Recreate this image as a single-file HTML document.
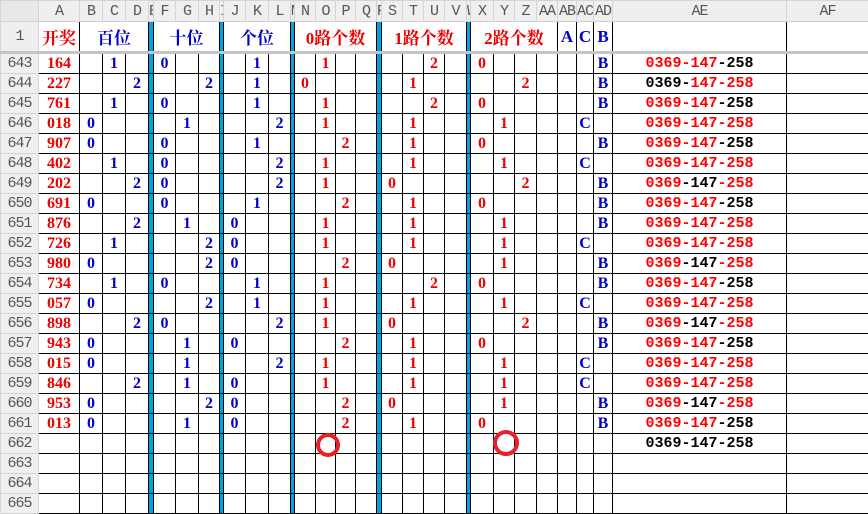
<!DOCTYPE html>
<html><head><meta charset="utf-8">
<style>
html,body{margin:0;padding:0;background:#fff;width:868px;height:505px;overflow:hidden}
table{border-collapse:collapse;table-layout:fixed;width:868px;position:absolute;left:0;top:0}
td,th{padding:0;overflow:hidden;white-space:nowrap;text-align:center}
td{border:1px solid #000;font:bold 16px "Liberation Serif","Noto Serif CJK SC",serif;color:#e00;height:19px;line-height:18px}
td.b{color:#0000cc}
td.c{background:#00a2e0}
td.e{font:bold 15px "Liberation Mono","DejaVu Sans Mono",monospace;color:#000}
.r{color:#ff0000}
th{background:#efefef;color:#555;font:15px "Liberation Mono",monospace;border:1px solid #d4d4d4;font-weight:normal;letter-spacing:-1px}
tr.h th{height:20px;border-bottom:1px solid #d0d0d0}
tr.t td{height:29px;border-bottom:3px solid #c4c4c4;font:bold 17px "Liberation Serif","Noto Serif CJK SC",serif}
tr.t th{border-bottom:3px solid #c4c4c4}
.ring{position:absolute;border:4px solid #e8202a;border-radius:50%;box-sizing:border-box}
</style></head><body>
<table>
<colgroup>
<col style="width:38px"><col style="width:41px"><col style="width:23px"><col style="width:23px"><col style="width:23px"><col style="width:5px"><col style="width:22px"><col style="width:23px"><col style="width:21px"><col style="width:4px"><col style="width:22px"><col style="width:23px"><col style="width:22px"><col style="width:4px"><col style="width:21px"><col style="width:20px"><col style="width:20px"><col style="width:21px"><col style="width:5px"><col style="width:21px"><col style="width:21px"><col style="width:21px"><col style="width:22px"><col style="width:4px"><col style="width:23px"><col style="width:21px"><col style="width:22px"><col style="width:21px"><col style="width:19px"><col style="width:17px"><col style="width:19px"><col style="width:174px"><col style="width:82px">
</colgroup>
<tr class="h"><th style="background:#e8e8e8"></th><th>A</th><th>B</th><th>C</th><th>D</th><th>E</th><th>F</th><th>G</th><th>H</th><th>I</th><th>J</th><th>K</th><th>L</th><th>M</th><th>N</th><th>O</th><th>P</th><th>Q</th><th>R</th><th>S</th><th>T</th><th>U</th><th>V</th><th>W</th><th>X</th><th>Y</th><th>Z</th><th>AA</th><th>AB</th><th>AC</th><th>AD</th><th>AE</th><th>AF</th></tr>
<tr class="t"><th>1</th><td>开奖</td><td colspan="3" class="b">百位</td><td class="c"></td><td colspan="3" class="b">十位</td><td class="c"></td><td colspan="3" class="b">个位</td><td class="c"></td><td colspan="4">0路个数</td><td class="c"></td><td colspan="4">1路个数</td><td class="c"></td><td colspan="4">2路个数</td><td class="b">A</td><td class="b">C</td><td class="b">B</td><td></td><td></td></tr>

<tr><th>643</th><td>164</td><td></td><td class="b">1</td><td></td><td class="c"></td><td class="b">0</td><td></td><td></td><td class="c"></td><td></td><td class="b">1</td><td></td><td class="c"></td><td></td><td>1</td><td></td><td></td><td class="c"></td><td></td><td></td><td>2</td><td></td><td class="c"></td><td>0</td><td></td><td></td><td></td><td></td><td></td><td class="b">B</td><td class="e"><span class="r">0369-147</span>-258</td><td></td></tr>
<tr><th>644</th><td>227</td><td></td><td></td><td class="b">2</td><td class="c"></td><td></td><td></td><td class="b">2</td><td class="c"></td><td></td><td class="b">1</td><td></td><td class="c"></td><td>0</td><td></td><td></td><td></td><td class="c"></td><td></td><td>1</td><td></td><td></td><td class="c"></td><td></td><td></td><td>2</td><td></td><td></td><td></td><td class="b">B</td><td class="e">0369-<span class="r">147-258</span></td><td></td></tr>
<tr><th>645</th><td>761</td><td></td><td class="b">1</td><td></td><td class="c"></td><td class="b">0</td><td></td><td></td><td class="c"></td><td></td><td class="b">1</td><td></td><td class="c"></td><td></td><td>1</td><td></td><td></td><td class="c"></td><td></td><td></td><td>2</td><td></td><td class="c"></td><td>0</td><td></td><td></td><td></td><td></td><td></td><td class="b">B</td><td class="e"><span class="r">0369-147</span>-258</td><td></td></tr>
<tr><th>646</th><td>018</td><td class="b">0</td><td></td><td></td><td class="c"></td><td></td><td class="b">1</td><td></td><td class="c"></td><td></td><td></td><td class="b">2</td><td class="c"></td><td></td><td>1</td><td></td><td></td><td class="c"></td><td></td><td>1</td><td></td><td></td><td class="c"></td><td></td><td>1</td><td></td><td></td><td></td><td class="b">C</td><td></td><td class="e"><span class="r">0369-147-258</span></td><td></td></tr>
<tr><th>647</th><td>907</td><td class="b">0</td><td></td><td></td><td class="c"></td><td class="b">0</td><td></td><td></td><td class="c"></td><td></td><td class="b">1</td><td></td><td class="c"></td><td></td><td></td><td>2</td><td></td><td class="c"></td><td></td><td>1</td><td></td><td></td><td class="c"></td><td>0</td><td></td><td></td><td></td><td></td><td></td><td class="b">B</td><td class="e"><span class="r">0369-147</span>-258</td><td></td></tr>
<tr><th>648</th><td>402</td><td></td><td class="b">1</td><td></td><td class="c"></td><td class="b">0</td><td></td><td></td><td class="c"></td><td></td><td></td><td class="b">2</td><td class="c"></td><td></td><td>1</td><td></td><td></td><td class="c"></td><td></td><td>1</td><td></td><td></td><td class="c"></td><td></td><td>1</td><td></td><td></td><td></td><td class="b">C</td><td></td><td class="e"><span class="r">0369-147-258</span></td><td></td></tr>
<tr><th>649</th><td>202</td><td></td><td></td><td class="b">2</td><td class="c"></td><td class="b">0</td><td></td><td></td><td class="c"></td><td></td><td></td><td class="b">2</td><td class="c"></td><td></td><td>1</td><td></td><td></td><td class="c"></td><td>0</td><td></td><td></td><td></td><td class="c"></td><td></td><td></td><td>2</td><td></td><td></td><td></td><td class="b">B</td><td class="e"><span class="r">0369</span>-147<span class="r">-258</span></td><td></td></tr>
<tr><th>650</th><td>691</td><td class="b">0</td><td></td><td></td><td class="c"></td><td class="b">0</td><td></td><td></td><td class="c"></td><td></td><td class="b">1</td><td></td><td class="c"></td><td></td><td></td><td>2</td><td></td><td class="c"></td><td></td><td>1</td><td></td><td></td><td class="c"></td><td>0</td><td></td><td></td><td></td><td></td><td></td><td class="b">B</td><td class="e"><span class="r">0369-147</span>-258</td><td></td></tr>
<tr><th>651</th><td>876</td><td></td><td></td><td class="b">2</td><td class="c"></td><td></td><td class="b">1</td><td></td><td class="c"></td><td class="b">0</td><td></td><td></td><td class="c"></td><td></td><td>1</td><td></td><td></td><td class="c"></td><td></td><td>1</td><td></td><td></td><td class="c"></td><td></td><td>1</td><td></td><td></td><td></td><td></td><td class="b">B</td><td class="e"><span class="r">0369-147-258</span></td><td></td></tr>
<tr><th>652</th><td>726</td><td></td><td class="b">1</td><td></td><td class="c"></td><td></td><td></td><td class="b">2</td><td class="c"></td><td class="b">0</td><td></td><td></td><td class="c"></td><td></td><td>1</td><td></td><td></td><td class="c"></td><td></td><td>1</td><td></td><td></td><td class="c"></td><td></td><td>1</td><td></td><td></td><td></td><td class="b">C</td><td></td><td class="e"><span class="r">0369-147-258</span></td><td></td></tr>
<tr><th>653</th><td>980</td><td class="b">0</td><td></td><td></td><td class="c"></td><td></td><td></td><td class="b">2</td><td class="c"></td><td class="b">0</td><td></td><td></td><td class="c"></td><td></td><td></td><td>2</td><td></td><td class="c"></td><td>0</td><td></td><td></td><td></td><td class="c"></td><td></td><td>1</td><td></td><td></td><td></td><td></td><td class="b">B</td><td class="e"><span class="r">0369</span>-147<span class="r">-258</span></td><td></td></tr>
<tr><th>654</th><td>734</td><td></td><td class="b">1</td><td></td><td class="c"></td><td class="b">0</td><td></td><td></td><td class="c"></td><td></td><td class="b">1</td><td></td><td class="c"></td><td></td><td>1</td><td></td><td></td><td class="c"></td><td></td><td></td><td>2</td><td></td><td class="c"></td><td>0</td><td></td><td></td><td></td><td></td><td></td><td class="b">B</td><td class="e"><span class="r">0369-147</span>-258</td><td></td></tr>
<tr><th>655</th><td>057</td><td class="b">0</td><td></td><td></td><td class="c"></td><td></td><td></td><td class="b">2</td><td class="c"></td><td></td><td class="b">1</td><td></td><td class="c"></td><td></td><td>1</td><td></td><td></td><td class="c"></td><td></td><td>1</td><td></td><td></td><td class="c"></td><td></td><td>1</td><td></td><td></td><td></td><td class="b">C</td><td></td><td class="e"><span class="r">0369-147-258</span></td><td></td></tr>
<tr><th>656</th><td>898</td><td></td><td></td><td class="b">2</td><td class="c"></td><td class="b">0</td><td></td><td></td><td class="c"></td><td></td><td></td><td class="b">2</td><td class="c"></td><td></td><td>1</td><td></td><td></td><td class="c"></td><td>0</td><td></td><td></td><td></td><td class="c"></td><td></td><td></td><td>2</td><td></td><td></td><td></td><td class="b">B</td><td class="e"><span class="r">0369</span>-147<span class="r">-258</span></td><td></td></tr>
<tr><th>657</th><td>943</td><td class="b">0</td><td></td><td></td><td class="c"></td><td></td><td class="b">1</td><td></td><td class="c"></td><td class="b">0</td><td></td><td></td><td class="c"></td><td></td><td></td><td>2</td><td></td><td class="c"></td><td></td><td>1</td><td></td><td></td><td class="c"></td><td>0</td><td></td><td></td><td></td><td></td><td></td><td class="b">B</td><td class="e"><span class="r">0369-147</span>-258</td><td></td></tr>
<tr><th>658</th><td>015</td><td class="b">0</td><td></td><td></td><td class="c"></td><td></td><td class="b">1</td><td></td><td class="c"></td><td></td><td></td><td class="b">2</td><td class="c"></td><td></td><td>1</td><td></td><td></td><td class="c"></td><td></td><td>1</td><td></td><td></td><td class="c"></td><td></td><td>1</td><td></td><td></td><td></td><td class="b">C</td><td></td><td class="e"><span class="r">0369-147-258</span></td><td></td></tr>
<tr><th>659</th><td>846</td><td></td><td></td><td class="b">2</td><td class="c"></td><td></td><td class="b">1</td><td></td><td class="c"></td><td class="b">0</td><td></td><td></td><td class="c"></td><td></td><td>1</td><td></td><td></td><td class="c"></td><td></td><td>1</td><td></td><td></td><td class="c"></td><td></td><td>1</td><td></td><td></td><td></td><td class="b">C</td><td></td><td class="e"><span class="r">0369-147-258</span></td><td></td></tr>
<tr><th>660</th><td>953</td><td class="b">0</td><td></td><td></td><td class="c"></td><td></td><td></td><td class="b">2</td><td class="c"></td><td class="b">0</td><td></td><td></td><td class="c"></td><td></td><td></td><td>2</td><td></td><td class="c"></td><td>0</td><td></td><td></td><td></td><td class="c"></td><td></td><td>1</td><td></td><td></td><td></td><td></td><td class="b">B</td><td class="e"><span class="r">0369</span>-147<span class="r">-258</span></td><td></td></tr>
<tr><th>661</th><td>013</td><td class="b">0</td><td></td><td></td><td class="c"></td><td></td><td class="b">1</td><td></td><td class="c"></td><td class="b">0</td><td></td><td></td><td class="c"></td><td></td><td></td><td>2</td><td></td><td class="c"></td><td></td><td>1</td><td></td><td></td><td class="c"></td><td>0</td><td></td><td></td><td></td><td></td><td></td><td class="b">B</td><td class="e"><span class="r">0369-147</span>-258</td><td></td></tr>
<tr><th>662</th><td></td><td></td><td></td><td></td><td class="c"></td><td></td><td></td><td></td><td class="c"></td><td></td><td></td><td></td><td class="c"></td><td></td><td></td><td></td><td></td><td class="c"></td><td></td><td></td><td></td><td></td><td class="c"></td><td></td><td></td><td></td><td></td><td></td><td></td><td></td><td class="e">0369-147-258</td><td></td></tr>
<tr><th>663</th><td></td><td></td><td></td><td></td><td class="c"></td><td></td><td></td><td></td><td class="c"></td><td></td><td></td><td></td><td class="c"></td><td></td><td></td><td></td><td></td><td class="c"></td><td></td><td></td><td></td><td></td><td class="c"></td><td></td><td></td><td></td><td></td><td></td><td></td><td></td><td></td><td></td></tr>
<tr><th>664</th><td></td><td></td><td></td><td></td><td class="c"></td><td></td><td></td><td></td><td class="c"></td><td></td><td></td><td></td><td class="c"></td><td></td><td></td><td></td><td></td><td class="c"></td><td></td><td></td><td></td><td></td><td class="c"></td><td></td><td></td><td></td><td></td><td></td><td></td><td></td><td></td><td></td></tr>
<tr><th>665</th><td></td><td></td><td></td><td></td><td class="c"></td><td></td><td></td><td></td><td class="c"></td><td></td><td></td><td></td><td class="c"></td><td></td><td></td><td></td><td></td><td class="c"></td><td></td><td></td><td></td><td></td><td class="c"></td><td></td><td></td><td></td><td></td><td></td><td></td><td></td><td></td><td></td></tr>
</table>
<div class="ring" style="left:316px;top:433px;width:24px;height:24px"></div>
<div class="ring" style="left:493px;top:430px;width:26px;height:26px"></div>
</body></html>
